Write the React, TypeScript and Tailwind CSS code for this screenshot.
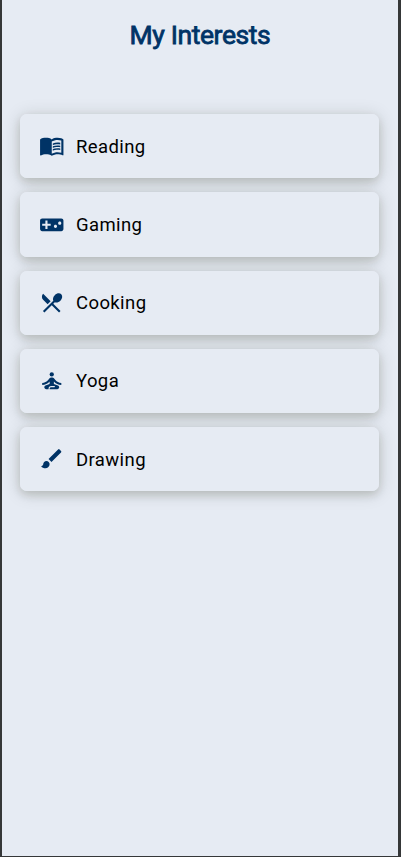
import React from 'react';
import {
  MdMenuBook,
  MdVideogameAsset,
  MdRestaurantMenu,
  MdSelfImprovement,
  MdBrush,
} from 'react-icons/md';
import type { IconType } from 'react-icons';

const interests: { label: string; Icon: IconType }[] = [
  { label: 'Reading', Icon: MdMenuBook },
  { label: 'Gaming', Icon: MdVideogameAsset },
  { label: 'Cooking', Icon: MdRestaurantMenu },
  { label: 'Yoga', Icon: MdSelfImprovement },
  { label: 'Drawing', Icon: MdBrush },
];

// The face sits above every card's shadow, so neighbouring shadows never tint it.
function InterestCard({ label, Icon }: { label: string; Icon: IconType }) {
  return (
    <li className="rounded-[7px] shadow-[0_4px_9px_rgba(30,30,0,0.14),0_2px_18px_rgba(30,35,0,0.16)]">
      <div className="relative z-10 flex h-[64.25px] items-center rounded-[7px] bg-[#e6ebf3] pl-[19px]">
        <Icon className="size-[25.5px] shrink-0 text-[#003366]" />
        <span className="ml-[11.5px] pt-px text-[18.5px] leading-6 font-normal tracking-[0.4px] text-black">
          {label}
        </span>
      </div>
    </li>
  );
}

export default function App() {
  return (
    <main className="h-[857px] w-full overflow-hidden border-r-[3px] border-b border-l-2 border-[#353738] bg-[#e6ebf3] font-[Roboto,sans-serif]">
      <h1 className="pt-[19px] text-center text-[26.5px] leading-8 font-normal tracking-[-0.4px] text-[#003366] [-webkit-text-stroke:0.8px_#003366]">
        My Interests
      </h1>
      <ul className="mt-[63px] mr-[19px] ml-[18px] flex flex-col gap-[14px]">
        {interests.map((item) => (
          <InterestCard key={item.label} {...item} />
        ))}
      </ul>
    </main>
  );
}
